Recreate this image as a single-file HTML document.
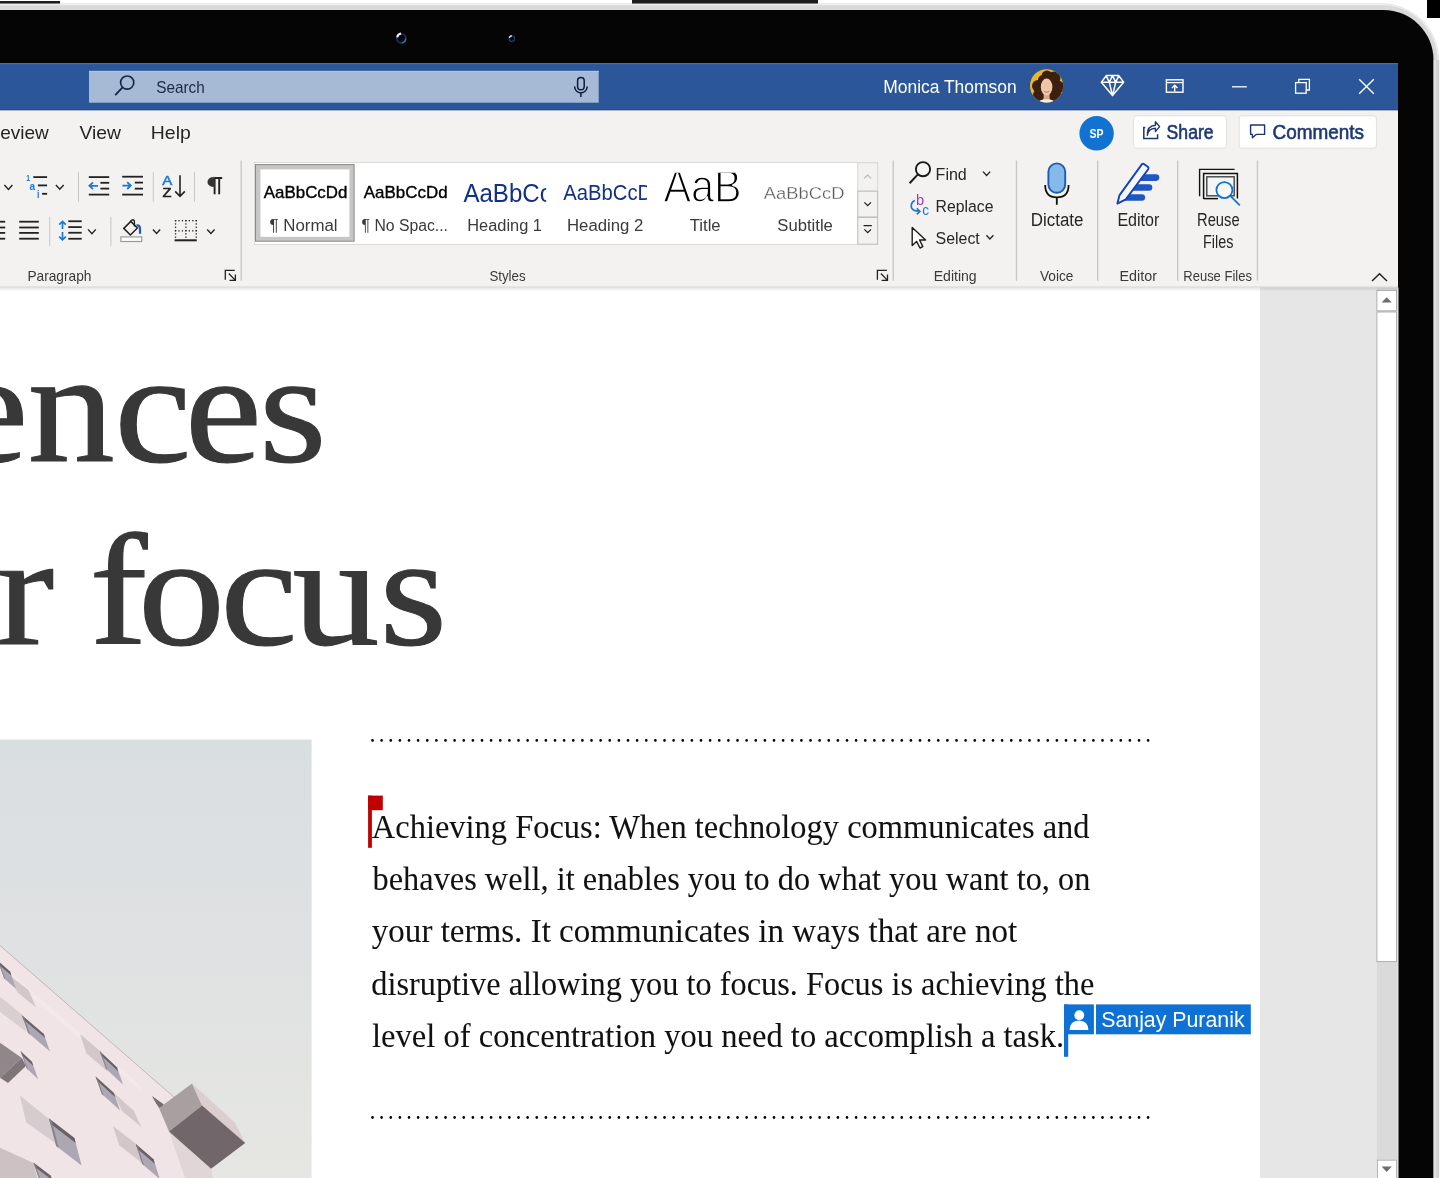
<!DOCTYPE html>
<html><head><meta charset="utf-8"><title>Word</title>
<style>
html,body{margin:0;padding:0;background:#fff;width:1440px;height:1178px;overflow:hidden;font-family:"Liberation Sans",sans-serif;}
svg{display:block;will-change:transform;}
</style></head><body>
<svg width="1440" height="1178" viewBox="0 0 1440 1178">
<rect x="0" y="0" width="1440" height="1178" fill="#ffffff" />
<rect x="-2" y="1" width="62" height="3.8" fill="#1c1c1c" />
<rect x="632" y="0" width="186" height="4.6" fill="#1c1c1c" />
<rect x="1427" y="0" width="13" height="18" fill="#000" />
<rect x="-120" y="3.6" width="1559" height="1400" rx="57" ry="57" fill="#d9d9da"/>
<rect x="-120" y="4.6" width="1558" height="1400" rx="56" ry="56" fill="none" stroke="#eeeeee" stroke-width="1.2"/>
<rect x="-120" y="10" width="1553.5" height="1400" rx="50" ry="50" fill="#050505"/>
<circle cx="401.3" cy="38.4" r="4.6" fill="#03060c" stroke="#1f3f7a" stroke-width="1.3"/>
<path d="M397.2 37.4 A4.6 4.6 0 0 1 401.0 33.6" fill="none" stroke="#f2f6ff" stroke-width="2.0" />
<path d="M405.6 38.6 A4.4 4.4 0 0 1 401.8 42.9" fill="none" stroke="#1f8a9a" stroke-width="1.3" />
<circle cx="511.8" cy="38.6" r="2.8" fill="#03060c" stroke="#23407a" stroke-width="1.1"/>
<path d="M509.4 37.8 A2.7 2.7 0 0 1 511.8 35.7" fill="none" stroke="#e8f0ff" stroke-width="1.4" />
<rect x="0" y="63" width="1398" height="1115" fill="#ffffff" />
<rect x="0" y="63" width="1398" height="47.5" fill="#2b579a" />
<rect x="0" y="63" width="1398" height="1.2" fill="#3a6cc0" />
<rect x="0" y="109.3" width="1398" height="1.2" fill="#234a88" />
<rect x="89" y="70.9" width="509.7" height="31.8" fill="#a6b9d5" />
<rect x="89" y="70.9" width="509.7" height="1" fill="#b3c6e0" />
<circle cx="127.2" cy="82.6" r="6.6" fill="none" stroke="#17264a" stroke-width="1.7"/>
<line x1="122.6" y1="87.4" x2="115.2" y2="95.2" stroke="#17264a" stroke-width="1.8" />
<text x="156.2" y="92.9" font-family="Liberation Sans" font-size="17" font-weight="400" fill="#1a2747" text-anchor="start" textLength="48.5" lengthAdjust="spacingAndGlyphs" >Search</text>
<rect x="577.6" y="77.6" width="6.6" height="12.2" rx="3.3" fill="none" stroke="#0e1a40" stroke-width="1.5"/>
<path d="M574.6 86.6 A6.3 6.3 0 0 0 587.2 86.6" fill="none" stroke="#0e1a40" stroke-width="1.5" />
<line x1="580.9" y1="92.9" x2="580.9" y2="97" stroke="#0e1a40" stroke-width="1.5" />
<text x="883.2" y="92.6" font-family="Liberation Sans" font-size="18" font-weight="400" fill="#ffffff" text-anchor="start" textLength="133.5" lengthAdjust="spacingAndGlyphs" >Monica Thomson</text>
<defs><clipPath id="avc"><circle cx="1046.6" cy="85.8" r="16.6"/></clipPath><radialGradient id="avbg" cx="0.5" cy="0.35" r="0.7"><stop offset="0" stop-color="#e8c24a"/><stop offset="1" stop-color="#b98a1c"/></radialGradient></defs>
<g clip-path="url(#avc)"><rect x="1029" y="68" width="36" height="36" fill="#e7b92a"/><circle cx="1047" cy="76" r="5.5" fill="#3d1f10"/><circle cx="1054" cy="78" r="6.5" fill="#3d1f10"/><circle cx="1038" cy="86" r="6" fill="#3d1f10"/><circle cx="1058" cy="87" r="6.5" fill="#3d1f10"/><circle cx="1039" cy="95" r="6" fill="#3d1f10"/><circle cx="1055" cy="96" r="6.5" fill="#3d1f10"/><circle cx="1047" cy="84" r="8.5" fill="#3d1f10"/><circle cx="1043" cy="80" r="5" fill="#3d1f10"/><rect x="1043.6" y="92" width="6" height="8" fill="#d9a584"/><ellipse cx="1046.6" cy="87" rx="5.8" ry="8.4" fill="#efc7a8"/><path d="M1044 91.4 Q1046.6 93.2 1049.2 91.4" fill="none" stroke="#c9677a" stroke-width="1"/><ellipse cx="1046.6" cy="103.2" rx="8.5" ry="4" fill="#f2efea"/></g>
<path d="M1106.2 75.6 L1118.8 75.6 L1123.6 82.2 L1112.5 95.6 L1101.4 82.2 Z M1101.4 82.2 L1123.6 82.2 M1106.2 75.6 L1109.3 82.2 L1112.5 95.6 L1115.7 82.2 L1118.8 75.6 M1109.3 82.2 L1112.5 75.6 L1115.7 82.2" fill="none" stroke="#ffffff" stroke-width="1.5" stroke-linejoin="round"/>
<rect x="1166.4" y="79.8" width="16.6" height="12.4" fill="none" stroke="#ffffff" stroke-width="1.4"/>
<line x1="1166.4" y1="82.6" x2="1183" y2="82.6" stroke="#ffffff" stroke-width="1.3" />
<path d="M1174.7 91.6 L1174.7 85.3 M1171.9 88 L1174.7 85.2 L1177.5 88" fill="none" stroke="#ffffff" stroke-width="1.4" />
<line x1="1232" y1="86.8" x2="1246.8" y2="86.8" stroke="#ffffff" stroke-width="1.3" />
<rect x="1295.6" y="82.6" width="10.6" height="10.6" fill="none" stroke="#ffffff" stroke-width="1.3"/>
<path d="M1298.8 82.6 L1298.8 79.4 L1309.4 79.4 L1309.4 90 L1306.2 90" fill="none" stroke="#ffffff" stroke-width="1.3" />
<path d="M1359.2 79.2 L1373.8 93.8 M1373.8 79.2 L1359.2 93.8" fill="none" stroke="#ffffff" stroke-width="1.4" />
<rect x="0" y="110.5" width="1398" height="177" fill="#f3f2f1" />
<rect x="0" y="286.5" width="1398" height="1.2" fill="#d8d6d4" />
<defs><linearGradient id="rsh" x1="0" y1="0" x2="0" y2="1"><stop offset="0" stop-color="#000" stop-opacity="0.10"/><stop offset="1" stop-color="#000" stop-opacity="0"/></linearGradient></defs>
<rect x="0" y="287.7" width="1376" height="5" fill="url(#rsh)" />
<text x="48.8" y="139" font-family="Liberation Sans" font-size="19" font-weight="400" fill="#262626" text-anchor="end" >Review</text>
<text x="79.5" y="139" font-family="Liberation Sans" font-size="19" font-weight="400" fill="#262626" text-anchor="start" textLength="41.5" lengthAdjust="spacingAndGlyphs" >View</text>
<text x="150.8" y="139" font-family="Liberation Sans" font-size="19" font-weight="400" fill="#262626" text-anchor="start" textLength="40" lengthAdjust="spacingAndGlyphs" >Help</text>
<circle cx="1096.6" cy="133.3" r="17.2" fill="#1172d1"/>
<text x="1096.6" y="138.2" font-family="Liberation Sans" font-size="12" font-weight="700" fill="#ffffff" text-anchor="middle" textLength="14" lengthAdjust="spacingAndGlyphs" >SP</text>
<rect x="1133.6" y="115.8" width="93" height="32.4" rx="2.5" fill="#ffffff" stroke="#e1dfdd" stroke-width="1"/>
<path d="M1145.2 127.6 L1143.8 127.6 L1143.8 138.6 L1157.6 138.6 L1157.6 134.2" fill="none" stroke="#1e3670" stroke-width="1.5" />
<path d="M1147.4 135.2 Q1148 128.6 1155.4 128.2 L1155.4 131.6 L1159.6 126.6 L1155.4 121.8 L1155.4 125.2 Q1147 125.8 1147.4 135.2Z" fill="none" stroke="#1e3670" stroke-width="1.4" stroke-linejoin="round"/>
<text x="1166.6" y="138.9" font-family="Liberation Sans" font-size="20" font-weight="400" fill="#1d3876" text-anchor="start" textLength="47" lengthAdjust="spacingAndGlyphs" stroke="#1d3876" stroke-width="0.6">Share</text>
<rect x="1239.2" y="115.8" width="137.2" height="32.4" rx="2.5" fill="#ffffff" stroke="#e1dfdd" stroke-width="1"/>
<path d="M1250.6 125 L1264.6 125 L1264.6 134.4 L1256.2 134.4 L1252.4 137.8 L1252.4 134.4 L1250.6 134.4 Z" fill="none" stroke="#1e3670" stroke-width="1.4" stroke-linejoin="round"/>
<text x="1272.6" y="138.9" font-family="Liberation Sans" font-size="20" font-weight="400" fill="#1d3876" text-anchor="start" textLength="91.5" lengthAdjust="spacingAndGlyphs" stroke="#1d3876" stroke-width="0.6">Comments</text>
<text x="27.4" y="280.8" font-family="Liberation Sans" font-size="14.2" font-weight="400" fill="#3b3a39" text-anchor="start" textLength="64" lengthAdjust="spacingAndGlyphs" >Paragraph</text>
<text x="489.4" y="280.8" font-family="Liberation Sans" font-size="14.2" font-weight="400" fill="#3b3a39" text-anchor="start" textLength="36.2" lengthAdjust="spacingAndGlyphs" >Styles</text>
<text x="933.7" y="280.8" font-family="Liberation Sans" font-size="14.2" font-weight="400" fill="#3b3a39" text-anchor="start" textLength="43" lengthAdjust="spacingAndGlyphs" >Editing</text>
<text x="1040" y="280.8" font-family="Liberation Sans" font-size="14.2" font-weight="400" fill="#3b3a39" text-anchor="start" textLength="33.5" lengthAdjust="spacingAndGlyphs" >Voice</text>
<text x="1119.5" y="280.8" font-family="Liberation Sans" font-size="14.2" font-weight="400" fill="#3b3a39" text-anchor="start" textLength="37.4" lengthAdjust="spacingAndGlyphs" >Editor</text>
<text x="1183.3" y="280.8" font-family="Liberation Sans" font-size="14.2" font-weight="400" fill="#3b3a39" text-anchor="start" textLength="68.6" lengthAdjust="spacingAndGlyphs" >Reuse Files</text>
<rect x="240.6" y="160.5" width="1.3" height="120.3" fill="#c8c6c4" />
<rect x="892.6" y="160.5" width="1.3" height="120.3" fill="#c8c6c4" />
<rect x="1015.8" y="160.5" width="1.3" height="120.3" fill="#c8c6c4" />
<rect x="1097.0" y="160.5" width="1.3" height="120.3" fill="#c8c6c4" />
<rect x="1177.0" y="160.5" width="1.3" height="120.3" fill="#c8c6c4" />
<rect x="1256.8000000000002" y="160.5" width="1.3" height="120.3" fill="#c8c6c4" />
<path d="M234.8 270.3 L225.3 270.3 L225.3 279.7" fill="none" stroke="#222" stroke-width="1.3" />
<path d="M228.8 273.5 L234.9 279.90000000000003 M235.4 274.40000000000003 L235.4 280.40000000000003 L229.5 280.40000000000003" fill="none" stroke="#222" stroke-width="1.3" />
<path d="M886.9 270.3 L877.4 270.3 L877.4 279.7" fill="none" stroke="#222" stroke-width="1.3" />
<path d="M880.9 273.5 L887.0 279.90000000000003 M887.5 274.40000000000003 L887.5 280.40000000000003 L881.6 280.40000000000003" fill="none" stroke="#222" stroke-width="1.3" />
<path d="M1372 281 L1379.5 273.8 L1387 281" fill="none" stroke="#222" stroke-width="1.5" />
<path d="M4.4 185.04 L8.4 189.35999999999999 L12.4 185.04" fill="none" stroke="#222" stroke-width="1.4" />
<text x="26.2" y="180.8" font-family="Liberation Sans" font-size="9.5" font-weight="700" fill="#1b79d3" text-anchor="start" textLength="3.8" lengthAdjust="spacingAndGlyphs" >1</text>
<text x="29.6" y="189.5" font-family="Liberation Sans" font-size="10.5" font-weight="700" fill="#1b79d3" text-anchor="start" textLength="5.6" lengthAdjust="spacingAndGlyphs" >a</text>
<text x="37.1" y="197.6" font-family="Liberation Sans" font-size="10.5" font-weight="700" fill="#1b79d3" text-anchor="start" textLength="2.4" lengthAdjust="spacingAndGlyphs" >i</text>
<rect x="33.3" y="176.2" width="13.8" height="1.8" fill="#222222" />
<rect x="37.9" y="184.5" width="9.2" height="1.8" fill="#222222" />
<rect x="42.1" y="192.9" width="5" height="1.8" fill="#222222" />
<path d="M55.9 185.094 L59.8 189.30599999999998 L63.7 185.094" fill="none" stroke="#222" stroke-width="1.4" />
<rect x="78" y="172.2" width="1" height="29.5" fill="#c8c6c4" />
<rect x="88.8" y="176.2" width="20.4" height="1.8" fill="#222222" />
<rect x="100.4" y="181.9" width="8.8" height="1.8" fill="#222222" />
<rect x="100.4" y="187.7" width="8.8" height="1.8" fill="#222222" />
<rect x="88.8" y="193.7" width="20.4" height="1.8" fill="#222222" />
<path d="M98 185.8 L89.6 185.8 M93 182.4 L89.4 185.8 L93 189.2" fill="none" stroke="#1b79d3" stroke-width="1.8" />
<rect x="122.2" y="175.8" width="20.8" height="1.8" fill="#222222" />
<rect x="134.8" y="181.7" width="8.2" height="1.8" fill="#222222" />
<rect x="134.8" y="187.75" width="8.2" height="1.8" fill="#222222" />
<rect x="122.2" y="193.7" width="20.8" height="1.8" fill="#222222" />
<path d="M122.4 185.6 L130.6 185.6 M127.2 182.2 L130.8 185.6 L127.2 189" fill="none" stroke="#1b79d3" stroke-width="1.8" />
<rect x="152.8" y="172.2" width="1" height="29.5" fill="#c8c6c4" />
<text x="162.2" y="184.5" font-family="Liberation Sans" font-size="12.6" font-weight="400" fill="#1b79d3" text-anchor="start" textLength="10" lengthAdjust="spacingAndGlyphs" stroke="#1b79d3" stroke-width="0.5">A</text>
<text x="162.4" y="197.1" font-family="Liberation Sans" font-size="12.6" font-weight="400" fill="#222222" text-anchor="start" textLength="9" lengthAdjust="spacingAndGlyphs" stroke="#222" stroke-width="0.5">Z</text>
<path d="M180 175.2 L180 196.2 M175.2 191.4 L180 196.4 L184.8 191.4" fill="none" stroke="#222222" stroke-width="1.6" />
<rect x="194" y="172.2" width="1" height="29.5" fill="#c8c6c4" />
<path d="M214.6 178 L222.2 178 M214.6 178 L214.6 194.3 M219.2 178 L219.2 194.3" fill="none" stroke="#222222" stroke-width="1.9" />
<path d="M214.6 177.2 Q207.8 177.2 207.8 181.9 Q207.8 186.6 214.6 186.6 Z" fill="#333" stroke="#333" stroke-width="0.6" />
<rect x="-1" y="220.79999999999998" width="6.2" height="1.8" fill="#222222" />
<rect x="19.2" y="220.79999999999998" width="19.6" height="1.8" fill="#222222" />
<rect x="-1" y="226.6" width="6.2" height="1.8" fill="#222222" />
<rect x="19.2" y="226.6" width="19.6" height="1.8" fill="#222222" />
<rect x="-1" y="232.0" width="6.2" height="1.8" fill="#222222" />
<rect x="19.2" y="232.0" width="19.6" height="1.8" fill="#222222" />
<rect x="-1" y="237.79999999999998" width="6.2" height="1.8" fill="#222222" />
<rect x="19.2" y="237.79999999999998" width="19.6" height="1.8" fill="#222222" />
<rect x="49.2" y="216.8" width="1" height="29" fill="#c8c6c4" />
<rect x="68.3" y="220.35" width="13.4" height="1.8" fill="#222222" />
<rect x="68.3" y="226.2" width="13.4" height="1.8" fill="#222222" />
<rect x="68.3" y="231.85" width="13.4" height="1.8" fill="#222222" />
<rect x="68.3" y="237.85" width="13.4" height="1.8" fill="#222222" />
<path d="M62.5 221.6 L62.5 229 M59.2 224.6 L62.5 221.4 L65.8 224.6 M62.5 232 L62.5 239.6 M59.2 236.6 L62.5 239.8 L65.8 236.6" fill="none" stroke="#1b79d3" stroke-width="1.7" />
<path d="M88 229.394 L91.9 233.606 L95.8 229.394" fill="none" stroke="#222" stroke-width="1.4" />
<rect x="110.4" y="216.8" width="1" height="29" fill="#c8c6c4" />
<path d="M123.8 228.4 L130.8 221.4 L137.4 228 L130.4 235 Z" fill="none" stroke="#222222" stroke-width="1.5" stroke-linejoin="miter"/>
<path d="M130.2 222 L131.4 220.6 Q133.4 218.8 134.4 221 L134.4 226.6" fill="none" stroke="#222222" stroke-width="1.4" />
<path d="M136.6 225.4 Q139.8 224.8 140 228.6 L140 233.8" fill="none" stroke="#1f56b5" stroke-width="2.2" />
<rect x="120.9" y="236.9" width="20.8" height="4.6" fill="#ffffff" stroke="#9a9a9a" stroke-width="1.2"/>
<path d="M153 229.556 L156.6 233.444 L160.2 229.556" fill="none" stroke="#222" stroke-width="1.4" />
<g fill="#222">
<rect x="174.90" y="220" width="1.3" height="1.3"/>
<rect x="174.90" y="230.2" width="1.3" height="1.3"/>
<rect x="178.35" y="220" width="1.3" height="1.3"/>
<rect x="178.35" y="230.2" width="1.3" height="1.3"/>
<rect x="181.80" y="220" width="1.3" height="1.3"/>
<rect x="181.80" y="230.2" width="1.3" height="1.3"/>
<rect x="185.25" y="220" width="1.3" height="1.3"/>
<rect x="185.25" y="230.2" width="1.3" height="1.3"/>
<rect x="188.70" y="220" width="1.3" height="1.3"/>
<rect x="188.70" y="230.2" width="1.3" height="1.3"/>
<rect x="192.15" y="220" width="1.3" height="1.3"/>
<rect x="192.15" y="230.2" width="1.3" height="1.3"/>
<rect x="195.60" y="220" width="1.3" height="1.3"/>
<rect x="195.60" y="230.2" width="1.3" height="1.3"/>
<rect x="174.9" y="220.00" width="1.3" height="1.3"/>
<rect x="185.25" y="220.00" width="1.3" height="1.3"/>
<rect x="195.6" y="220.00" width="1.3" height="1.3"/>
<rect x="174.9" y="223.30" width="1.3" height="1.3"/>
<rect x="185.25" y="223.30" width="1.3" height="1.3"/>
<rect x="195.6" y="223.30" width="1.3" height="1.3"/>
<rect x="174.9" y="226.60" width="1.3" height="1.3"/>
<rect x="185.25" y="226.60" width="1.3" height="1.3"/>
<rect x="195.6" y="226.60" width="1.3" height="1.3"/>
<rect x="174.9" y="229.90" width="1.3" height="1.3"/>
<rect x="185.25" y="229.90" width="1.3" height="1.3"/>
<rect x="195.6" y="229.90" width="1.3" height="1.3"/>
<rect x="174.9" y="233.20" width="1.3" height="1.3"/>
<rect x="185.25" y="233.20" width="1.3" height="1.3"/>
<rect x="195.6" y="233.20" width="1.3" height="1.3"/>
<rect x="174.9" y="236.50" width="1.3" height="1.3"/>
<rect x="185.25" y="236.50" width="1.3" height="1.3"/>
<rect x="195.6" y="236.50" width="1.3" height="1.3"/>
</g>
<rect x="174.6" y="239.3" width="22.2" height="2" fill="#222222" />
<path d="M207.2 229.502 L210.89999999999998 233.498 L214.6 229.502" fill="none" stroke="#222" stroke-width="1.4" />
<rect x="254.5" y="162.5" width="623" height="82" fill="#ffffff" stroke="#dcdad8" stroke-width="1"/>
<rect x="255.5" y="164.6" width="98.6" height="76.6" fill="#c8c6c4" stroke="#8a8886" stroke-width="1"/>
<rect x="260.4" y="169.4" width="89" height="67.4" fill="#ffffff" />
<text x="263.8" y="198.3" font-family="Liberation Sans" font-size="16.4" font-weight="400" fill="#000000" text-anchor="start" textLength="83.6" lengthAdjust="spacingAndGlyphs" stroke="#000" stroke-width="0.35">AaBbCcDd</text>
<text x="269.6" y="231.2" font-family="Liberation Sans" font-size="16" font-weight="400" fill="#3b3a39" text-anchor="start" textLength="68" lengthAdjust="spacingAndGlyphs" >¶ Normal</text>
<text x="363.8" y="198.3" font-family="Liberation Sans" font-size="16.4" font-weight="400" fill="#000000" text-anchor="start" textLength="83.8" lengthAdjust="spacingAndGlyphs" stroke="#000" stroke-width="0.35">AaBbCcDd</text>
<text x="361.6" y="231.2" font-family="Liberation Sans" font-size="16" font-weight="400" fill="#3b3a39" text-anchor="start" textLength="86.4" lengthAdjust="spacingAndGlyphs" >¶ No Spac...</text>
<defs><clipPath id="h1c"><rect x="455" y="163" width="91.2" height="60"/></clipPath><clipPath id="h2c"><rect x="555" y="163" width="92" height="60"/></clipPath><clipPath id="tc"><rect x="655" y="172.85" width="90" height="50"/></clipPath></defs>
<text x="463.4" y="201.6" font-family="Liberation Sans" font-size="25.6" font-weight="400" fill="#10308a" text-anchor="start" textLength="88.3" lengthAdjust="spacingAndGlyphs" clip-path="url(#h1c)">AaBbCc</text>
<text x="467.2" y="231.4" font-family="Liberation Sans" font-size="16" font-weight="400" fill="#3b3a39" text-anchor="start" textLength="74.8" lengthAdjust="spacingAndGlyphs" >Heading 1</text>
<text x="563.2" y="200" font-family="Liberation Sans" font-size="22.4" font-weight="400" fill="#10308a" text-anchor="start" textLength="89" lengthAdjust="spacingAndGlyphs" clip-path="url(#h2c)">AaBbCcD</text>
<text x="567" y="231.4" font-family="Liberation Sans" font-size="16" font-weight="400" fill="#3b3a39" text-anchor="start" textLength="76.4" lengthAdjust="spacingAndGlyphs" >Heading 2</text>
<text x="663.4" y="201.7" font-family="Liberation Sans" font-size="46" font-weight="400" fill="#000000" text-anchor="start" textLength="78.4" lengthAdjust="spacingAndGlyphs" clip-path="url(#tc)" stroke="#fff" stroke-width="1.5">AaB</text>
<text x="689.8" y="231.4" font-family="Liberation Sans" font-size="16" font-weight="400" fill="#3b3a39" text-anchor="start" textLength="30.8" lengthAdjust="spacingAndGlyphs" >Title</text>
<text x="763.8" y="198.8" font-family="Liberation Sans" font-size="17.4" font-weight="400" fill="#595959" text-anchor="start" textLength="80.6" lengthAdjust="spacingAndGlyphs" stroke="#fff" stroke-width="0.3">AaBbCcD</text>
<text x="777.3" y="231.4" font-family="Liberation Sans" font-size="16" font-weight="400" fill="#3b3a39" text-anchor="start" textLength="55.6" lengthAdjust="spacingAndGlyphs" >Subtitle</text>
<rect x="857.5" y="162.5" width="20.3" height="82" fill="#f3f2f1" />
<rect x="857.8" y="162.8" width="19.8" height="28.2" fill="#f3f2f1" stroke="#d8d6d4" stroke-width="1"/>
<rect x="857.8" y="191.2" width="19.8" height="25.8" fill="#f3f2f1" stroke="#bebcba" stroke-width="1"/>
<rect x="857.8" y="217.4" width="19.8" height="26.8" fill="#f3f2f1" stroke="#bebcba" stroke-width="1"/>
<path d="M864.2 178.4 L867.7 175 L871.2 178.4" fill="none" stroke="#b8b6b4" stroke-width="1.2" />
<path d="M864.4 202.4 L867.7 205.6 L871 202.4" fill="none" stroke="#222" stroke-width="1.3" />
<path d="M863.6 225.6 L871.8 225.6 M864.4 229.4 L867.7 232.6 L871 229.4" fill="none" stroke="#222" stroke-width="1.3" />
<circle cx="923" cy="169.2" r="7.1" fill="#f6f6f6" stroke="#1a1a1a" stroke-width="1.9"/>
<line x1="917.9" y1="174.4" x2="909.6" y2="183.2" stroke="#1a1a1a" stroke-width="2" />
<text x="935.6" y="179.6" font-family="Liberation Sans" font-size="17.2" font-weight="400" fill="#262626" text-anchor="start" textLength="31.2" lengthAdjust="spacingAndGlyphs" >Find</text>
<path d="M983 171.65599999999998 L986.6 175.544 L990.2 171.65599999999998" fill="none" stroke="#222" stroke-width="1.3" />
<text x="916" y="204.7" font-family="Liberation Sans" font-size="14" font-weight="400" fill="#a23cb8" text-anchor="start" textLength="8.2" lengthAdjust="spacingAndGlyphs" >b</text>
<path d="M914.8 200.4 Q910.4 202.4 911.4 207.6 Q912.6 211.4 920 211.2" fill="none" stroke="#1e78cf" stroke-width="1.7" />
<path d="M916.8 208.4 L919.9 211.4 L916.8 214.4" fill="none" stroke="#1e78cf" stroke-width="1.6" />
<text x="922.2" y="215.4" font-family="Liberation Sans" font-size="14.5" font-weight="400" fill="#1e78cf" text-anchor="start" textLength="6.8" lengthAdjust="spacingAndGlyphs" >c</text>
<text x="935.6" y="211.5" font-family="Liberation Sans" font-size="17.2" font-weight="400" fill="#262626" text-anchor="start" textLength="57.8" lengthAdjust="spacingAndGlyphs" >Replace</text>
<path d="M912.2 227.4 L912.2 245.6 L916.6 241.4 L920 248 L922.8 246.6 L919.6 240 L925.6 240 Z" fill="#ffffff" stroke="#1a1a1a" stroke-width="1.4" stroke-linejoin="round"/>
<text x="935.6" y="244.1" font-family="Liberation Sans" font-size="17.2" font-weight="400" fill="#262626" text-anchor="start" textLength="44.2" lengthAdjust="spacingAndGlyphs" >Select</text>
<path d="M986.4 235.21 L989.9 238.98999999999998 L993.4 235.21" fill="none" stroke="#222" stroke-width="1.3" />
<rect x="1048.4" y="163.4" width="16.8" height="29.4" rx="8.4" fill="#84b9e9" stroke="#1b5cb6" stroke-width="1.9"/>
<path d="M1045.2 185 Q1045.2 197.4 1056.8 197.4 Q1068.6 197.4 1068.6 185" fill="none" stroke="#111" stroke-width="1.8" />
<line x1="1056.8" y1="197.4" x2="1056.8" y2="204.8" stroke="#111" stroke-width="1.8" />
<text x="1030.8" y="226.3" font-family="Liberation Sans" font-size="17.6" font-weight="400" fill="#262626" text-anchor="start" textLength="52.6" lengthAdjust="spacingAndGlyphs" >Dictate</text>
<line x1="1138" y1="177.6" x2="1156" y2="177.6" stroke="#1f56c0" stroke-width="6.6" stroke-linecap="round"/>
<line x1="1130" y1="187.5" x2="1149" y2="187.5" stroke="#1f56c0" stroke-width="6.6" stroke-linecap="round"/>
<line x1="1124" y1="197.5" x2="1141.8" y2="197.5" stroke="#1f56c0" stroke-width="6.6" stroke-linecap="round"/>
<path d="M1117.4 203.6 L1119.4 195.4 L1141.8 164.4 Q1142.8 163.2 1144 164 L1148 167 Q1149 168 1148.2 169.2 L1125.8 199.4 Z" fill="#f7f7f7" stroke="#0e45b8" stroke-width="1.9" stroke-linejoin="round"/>
<text x="1117.4" y="226.3" font-family="Liberation Sans" font-size="17.6" font-weight="400" fill="#262626" text-anchor="start" textLength="42" lengthAdjust="spacingAndGlyphs" >Editor</text>
<path d="M1199.6 196.2 L1199.6 169.4 L1234.6 169.4" fill="none" stroke="#111" stroke-width="1.4" />
<path d="M1203.6 199 L1203.6 173.6 L1237.4 173.6 L1237.4 198.6" fill="none" stroke="#111" stroke-width="1.5" />
<line x1="1203.6" y1="198.6" x2="1218" y2="198.6" stroke="#111" stroke-width="1.5" />
<rect x="1206.8" y="176.8" width="27.4" height="19" fill="#f4f5f7" stroke="#444" stroke-width="1.4"/>
<circle cx="1224.4" cy="190.1" r="8" fill="#f5f7f9" stroke="#1671c9" stroke-width="1.8"/>
<line x1="1230.2" y1="195.6" x2="1239.8" y2="205.4" stroke="#1671c9" stroke-width="1.8" />
<text x="1197" y="225.8" font-family="Liberation Sans" font-size="17.6" font-weight="400" fill="#262626" text-anchor="start" textLength="42.6" lengthAdjust="spacingAndGlyphs" >Reuse</text>
<text x="1203" y="248.3" font-family="Liberation Sans" font-size="17.6" font-weight="400" fill="#262626" text-anchor="start" textLength="30.4" lengthAdjust="spacingAndGlyphs" >Files</text>
<rect x="0" y="287.5" width="1260" height="890.5" fill="#ffffff" />
<rect x="1260" y="287.5" width="116.5" height="890.5" fill="#e6e6e6" />
<rect x="1376.5" y="287.5" width="21.5" height="890.5" fill="#dadada" />
<rect x="1376.9" y="290.4" width="19.6" height="20.4" fill="#ffffff" stroke="#a9a9a9" stroke-width="0.9"/>
<path d="M1381.6 302.6 L1386.7 297.2 L1391.8 302.6 Z" fill="#6e6e6e" />
<rect x="1376.9" y="312" width="19.6" height="649.6" fill="#ffffff" stroke="#a9a9a9" stroke-width="0.9"/>
<rect x="1377.4" y="1160.2" width="19" height="20" fill="#ffffff" stroke="#b0b0b0" stroke-width="0.9"/>
<path d="M1381.6 1166.6 L1391.8 1166.6 L1386.7 1172 Z" fill="#6e6e6e" />
<rect x="1397.6" y="287.5" width="0.9" height="890.5" fill="#e8ecf4" />
<rect x="0" y="287.5" width="1398" height="4" fill="url(#rsh)" />
<rect x="1433.6" y="60" width="5.6" height="1118" fill="#d4d4d6" />
<rect x="1434.4" y="60" width="1.2" height="1118" fill="#ececec" />
<text transform="scale(1.1 1)" x="-44.29 25.34 103.9 168.0 235.55" y="461.5" font-family="Liberation Serif" font-size="158" fill="#383838" stroke="#383838" stroke-width="1.1">ences</text>
<text transform="scale(1.1 1)" x="-3.32 81.35 125.36 200.22 265.81 345.01" y="644" font-family="Liberation Serif" font-size="158" fill="#383838" stroke="#383838" stroke-width="1.1">rfocus</text>
<defs><linearGradient id="sky" x1="0" y1="0" x2="0" y2="1"><stop offset="0" stop-color="#d9dee1"/><stop offset="0.45" stop-color="#dfe1e2"/><stop offset="1" stop-color="#e6e7e2"/></linearGradient><clipPath id="imgc"><rect x="0" y="739.5" width="311.6" height="440"/></clipPath></defs>
<rect x="0" y="739.5" width="311.6" height="440" fill="url(#sky)" />
<g fill="#000">
<ellipse cx="372.50" cy="740.4" rx="1.3" ry="1.45"/>
<ellipse cx="381.62" cy="740.4" rx="1.3" ry="1.45"/>
<ellipse cx="390.75" cy="740.4" rx="1.3" ry="1.45"/>
<ellipse cx="399.88" cy="740.4" rx="1.3" ry="1.45"/>
<ellipse cx="409.00" cy="740.4" rx="1.3" ry="1.45"/>
<ellipse cx="418.12" cy="740.4" rx="1.3" ry="1.45"/>
<ellipse cx="427.25" cy="740.4" rx="1.3" ry="1.45"/>
<ellipse cx="436.38" cy="740.4" rx="1.3" ry="1.45"/>
<ellipse cx="445.50" cy="740.4" rx="1.3" ry="1.45"/>
<ellipse cx="454.62" cy="740.4" rx="1.3" ry="1.45"/>
<ellipse cx="463.75" cy="740.4" rx="1.3" ry="1.45"/>
<ellipse cx="472.88" cy="740.4" rx="1.3" ry="1.45"/>
<ellipse cx="482.00" cy="740.4" rx="1.3" ry="1.45"/>
<ellipse cx="491.12" cy="740.4" rx="1.3" ry="1.45"/>
<ellipse cx="500.25" cy="740.4" rx="1.3" ry="1.45"/>
<ellipse cx="509.38" cy="740.4" rx="1.3" ry="1.45"/>
<ellipse cx="518.50" cy="740.4" rx="1.3" ry="1.45"/>
<ellipse cx="527.62" cy="740.4" rx="1.3" ry="1.45"/>
<ellipse cx="536.75" cy="740.4" rx="1.3" ry="1.45"/>
<ellipse cx="545.88" cy="740.4" rx="1.3" ry="1.45"/>
<ellipse cx="555.00" cy="740.4" rx="1.3" ry="1.45"/>
<ellipse cx="564.12" cy="740.4" rx="1.3" ry="1.45"/>
<ellipse cx="573.25" cy="740.4" rx="1.3" ry="1.45"/>
<ellipse cx="582.38" cy="740.4" rx="1.3" ry="1.45"/>
<ellipse cx="591.50" cy="740.4" rx="1.3" ry="1.45"/>
<ellipse cx="600.62" cy="740.4" rx="1.3" ry="1.45"/>
<ellipse cx="609.75" cy="740.4" rx="1.3" ry="1.45"/>
<ellipse cx="618.88" cy="740.4" rx="1.3" ry="1.45"/>
<ellipse cx="628.00" cy="740.4" rx="1.3" ry="1.45"/>
<ellipse cx="637.12" cy="740.4" rx="1.3" ry="1.45"/>
<ellipse cx="646.25" cy="740.4" rx="1.3" ry="1.45"/>
<ellipse cx="655.38" cy="740.4" rx="1.3" ry="1.45"/>
<ellipse cx="664.50" cy="740.4" rx="1.3" ry="1.45"/>
<ellipse cx="673.62" cy="740.4" rx="1.3" ry="1.45"/>
<ellipse cx="682.75" cy="740.4" rx="1.3" ry="1.45"/>
<ellipse cx="691.88" cy="740.4" rx="1.3" ry="1.45"/>
<ellipse cx="701.00" cy="740.4" rx="1.3" ry="1.45"/>
<ellipse cx="710.12" cy="740.4" rx="1.3" ry="1.45"/>
<ellipse cx="719.25" cy="740.4" rx="1.3" ry="1.45"/>
<ellipse cx="728.38" cy="740.4" rx="1.3" ry="1.45"/>
<ellipse cx="737.50" cy="740.4" rx="1.3" ry="1.45"/>
<ellipse cx="746.62" cy="740.4" rx="1.3" ry="1.45"/>
<ellipse cx="755.75" cy="740.4" rx="1.3" ry="1.45"/>
<ellipse cx="764.88" cy="740.4" rx="1.3" ry="1.45"/>
<ellipse cx="774.00" cy="740.4" rx="1.3" ry="1.45"/>
<ellipse cx="783.12" cy="740.4" rx="1.3" ry="1.45"/>
<ellipse cx="792.25" cy="740.4" rx="1.3" ry="1.45"/>
<ellipse cx="801.38" cy="740.4" rx="1.3" ry="1.45"/>
<ellipse cx="810.50" cy="740.4" rx="1.3" ry="1.45"/>
<ellipse cx="819.62" cy="740.4" rx="1.3" ry="1.45"/>
<ellipse cx="828.75" cy="740.4" rx="1.3" ry="1.45"/>
<ellipse cx="837.88" cy="740.4" rx="1.3" ry="1.45"/>
<ellipse cx="847.00" cy="740.4" rx="1.3" ry="1.45"/>
<ellipse cx="856.12" cy="740.4" rx="1.3" ry="1.45"/>
<ellipse cx="865.25" cy="740.4" rx="1.3" ry="1.45"/>
<ellipse cx="874.38" cy="740.4" rx="1.3" ry="1.45"/>
<ellipse cx="883.50" cy="740.4" rx="1.3" ry="1.45"/>
<ellipse cx="892.62" cy="740.4" rx="1.3" ry="1.45"/>
<ellipse cx="901.75" cy="740.4" rx="1.3" ry="1.45"/>
<ellipse cx="910.88" cy="740.4" rx="1.3" ry="1.45"/>
<ellipse cx="920.00" cy="740.4" rx="1.3" ry="1.45"/>
<ellipse cx="929.12" cy="740.4" rx="1.3" ry="1.45"/>
<ellipse cx="938.25" cy="740.4" rx="1.3" ry="1.45"/>
<ellipse cx="947.38" cy="740.4" rx="1.3" ry="1.45"/>
<ellipse cx="956.50" cy="740.4" rx="1.3" ry="1.45"/>
<ellipse cx="965.62" cy="740.4" rx="1.3" ry="1.45"/>
<ellipse cx="974.75" cy="740.4" rx="1.3" ry="1.45"/>
<ellipse cx="983.88" cy="740.4" rx="1.3" ry="1.45"/>
<ellipse cx="993.00" cy="740.4" rx="1.3" ry="1.45"/>
<ellipse cx="1002.12" cy="740.4" rx="1.3" ry="1.45"/>
<ellipse cx="1011.25" cy="740.4" rx="1.3" ry="1.45"/>
<ellipse cx="1020.38" cy="740.4" rx="1.3" ry="1.45"/>
<ellipse cx="1029.50" cy="740.4" rx="1.3" ry="1.45"/>
<ellipse cx="1038.62" cy="740.4" rx="1.3" ry="1.45"/>
<ellipse cx="1047.75" cy="740.4" rx="1.3" ry="1.45"/>
<ellipse cx="1056.88" cy="740.4" rx="1.3" ry="1.45"/>
<ellipse cx="1066.00" cy="740.4" rx="1.3" ry="1.45"/>
<ellipse cx="1075.12" cy="740.4" rx="1.3" ry="1.45"/>
<ellipse cx="1084.25" cy="740.4" rx="1.3" ry="1.45"/>
<ellipse cx="1093.38" cy="740.4" rx="1.3" ry="1.45"/>
<ellipse cx="1102.50" cy="740.4" rx="1.3" ry="1.45"/>
<ellipse cx="1111.62" cy="740.4" rx="1.3" ry="1.45"/>
<ellipse cx="1120.75" cy="740.4" rx="1.3" ry="1.45"/>
<ellipse cx="1129.88" cy="740.4" rx="1.3" ry="1.45"/>
<ellipse cx="1139.00" cy="740.4" rx="1.3" ry="1.45"/>
<ellipse cx="1148.12" cy="740.4" rx="1.3" ry="1.45"/>
<ellipse cx="372.50" cy="1117.5" rx="1.3" ry="1.45"/>
<ellipse cx="381.62" cy="1117.5" rx="1.3" ry="1.45"/>
<ellipse cx="390.75" cy="1117.5" rx="1.3" ry="1.45"/>
<ellipse cx="399.88" cy="1117.5" rx="1.3" ry="1.45"/>
<ellipse cx="409.00" cy="1117.5" rx="1.3" ry="1.45"/>
<ellipse cx="418.12" cy="1117.5" rx="1.3" ry="1.45"/>
<ellipse cx="427.25" cy="1117.5" rx="1.3" ry="1.45"/>
<ellipse cx="436.38" cy="1117.5" rx="1.3" ry="1.45"/>
<ellipse cx="445.50" cy="1117.5" rx="1.3" ry="1.45"/>
<ellipse cx="454.62" cy="1117.5" rx="1.3" ry="1.45"/>
<ellipse cx="463.75" cy="1117.5" rx="1.3" ry="1.45"/>
<ellipse cx="472.88" cy="1117.5" rx="1.3" ry="1.45"/>
<ellipse cx="482.00" cy="1117.5" rx="1.3" ry="1.45"/>
<ellipse cx="491.12" cy="1117.5" rx="1.3" ry="1.45"/>
<ellipse cx="500.25" cy="1117.5" rx="1.3" ry="1.45"/>
<ellipse cx="509.38" cy="1117.5" rx="1.3" ry="1.45"/>
<ellipse cx="518.50" cy="1117.5" rx="1.3" ry="1.45"/>
<ellipse cx="527.62" cy="1117.5" rx="1.3" ry="1.45"/>
<ellipse cx="536.75" cy="1117.5" rx="1.3" ry="1.45"/>
<ellipse cx="545.88" cy="1117.5" rx="1.3" ry="1.45"/>
<ellipse cx="555.00" cy="1117.5" rx="1.3" ry="1.45"/>
<ellipse cx="564.12" cy="1117.5" rx="1.3" ry="1.45"/>
<ellipse cx="573.25" cy="1117.5" rx="1.3" ry="1.45"/>
<ellipse cx="582.38" cy="1117.5" rx="1.3" ry="1.45"/>
<ellipse cx="591.50" cy="1117.5" rx="1.3" ry="1.45"/>
<ellipse cx="600.62" cy="1117.5" rx="1.3" ry="1.45"/>
<ellipse cx="609.75" cy="1117.5" rx="1.3" ry="1.45"/>
<ellipse cx="618.88" cy="1117.5" rx="1.3" ry="1.45"/>
<ellipse cx="628.00" cy="1117.5" rx="1.3" ry="1.45"/>
<ellipse cx="637.12" cy="1117.5" rx="1.3" ry="1.45"/>
<ellipse cx="646.25" cy="1117.5" rx="1.3" ry="1.45"/>
<ellipse cx="655.38" cy="1117.5" rx="1.3" ry="1.45"/>
<ellipse cx="664.50" cy="1117.5" rx="1.3" ry="1.45"/>
<ellipse cx="673.62" cy="1117.5" rx="1.3" ry="1.45"/>
<ellipse cx="682.75" cy="1117.5" rx="1.3" ry="1.45"/>
<ellipse cx="691.88" cy="1117.5" rx="1.3" ry="1.45"/>
<ellipse cx="701.00" cy="1117.5" rx="1.3" ry="1.45"/>
<ellipse cx="710.12" cy="1117.5" rx="1.3" ry="1.45"/>
<ellipse cx="719.25" cy="1117.5" rx="1.3" ry="1.45"/>
<ellipse cx="728.38" cy="1117.5" rx="1.3" ry="1.45"/>
<ellipse cx="737.50" cy="1117.5" rx="1.3" ry="1.45"/>
<ellipse cx="746.62" cy="1117.5" rx="1.3" ry="1.45"/>
<ellipse cx="755.75" cy="1117.5" rx="1.3" ry="1.45"/>
<ellipse cx="764.88" cy="1117.5" rx="1.3" ry="1.45"/>
<ellipse cx="774.00" cy="1117.5" rx="1.3" ry="1.45"/>
<ellipse cx="783.12" cy="1117.5" rx="1.3" ry="1.45"/>
<ellipse cx="792.25" cy="1117.5" rx="1.3" ry="1.45"/>
<ellipse cx="801.38" cy="1117.5" rx="1.3" ry="1.45"/>
<ellipse cx="810.50" cy="1117.5" rx="1.3" ry="1.45"/>
<ellipse cx="819.62" cy="1117.5" rx="1.3" ry="1.45"/>
<ellipse cx="828.75" cy="1117.5" rx="1.3" ry="1.45"/>
<ellipse cx="837.88" cy="1117.5" rx="1.3" ry="1.45"/>
<ellipse cx="847.00" cy="1117.5" rx="1.3" ry="1.45"/>
<ellipse cx="856.12" cy="1117.5" rx="1.3" ry="1.45"/>
<ellipse cx="865.25" cy="1117.5" rx="1.3" ry="1.45"/>
<ellipse cx="874.38" cy="1117.5" rx="1.3" ry="1.45"/>
<ellipse cx="883.50" cy="1117.5" rx="1.3" ry="1.45"/>
<ellipse cx="892.62" cy="1117.5" rx="1.3" ry="1.45"/>
<ellipse cx="901.75" cy="1117.5" rx="1.3" ry="1.45"/>
<ellipse cx="910.88" cy="1117.5" rx="1.3" ry="1.45"/>
<ellipse cx="920.00" cy="1117.5" rx="1.3" ry="1.45"/>
<ellipse cx="929.12" cy="1117.5" rx="1.3" ry="1.45"/>
<ellipse cx="938.25" cy="1117.5" rx="1.3" ry="1.45"/>
<ellipse cx="947.38" cy="1117.5" rx="1.3" ry="1.45"/>
<ellipse cx="956.50" cy="1117.5" rx="1.3" ry="1.45"/>
<ellipse cx="965.62" cy="1117.5" rx="1.3" ry="1.45"/>
<ellipse cx="974.75" cy="1117.5" rx="1.3" ry="1.45"/>
<ellipse cx="983.88" cy="1117.5" rx="1.3" ry="1.45"/>
<ellipse cx="993.00" cy="1117.5" rx="1.3" ry="1.45"/>
<ellipse cx="1002.12" cy="1117.5" rx="1.3" ry="1.45"/>
<ellipse cx="1011.25" cy="1117.5" rx="1.3" ry="1.45"/>
<ellipse cx="1020.38" cy="1117.5" rx="1.3" ry="1.45"/>
<ellipse cx="1029.50" cy="1117.5" rx="1.3" ry="1.45"/>
<ellipse cx="1038.62" cy="1117.5" rx="1.3" ry="1.45"/>
<ellipse cx="1047.75" cy="1117.5" rx="1.3" ry="1.45"/>
<ellipse cx="1056.88" cy="1117.5" rx="1.3" ry="1.45"/>
<ellipse cx="1066.00" cy="1117.5" rx="1.3" ry="1.45"/>
<ellipse cx="1075.12" cy="1117.5" rx="1.3" ry="1.45"/>
<ellipse cx="1084.25" cy="1117.5" rx="1.3" ry="1.45"/>
<ellipse cx="1093.38" cy="1117.5" rx="1.3" ry="1.45"/>
<ellipse cx="1102.50" cy="1117.5" rx="1.3" ry="1.45"/>
<ellipse cx="1111.62" cy="1117.5" rx="1.3" ry="1.45"/>
<ellipse cx="1120.75" cy="1117.5" rx="1.3" ry="1.45"/>
<ellipse cx="1129.88" cy="1117.5" rx="1.3" ry="1.45"/>
<ellipse cx="1139.00" cy="1117.5" rx="1.3" ry="1.45"/>
<ellipse cx="1148.12" cy="1117.5" rx="1.3" ry="1.45"/>
</g>
<g transform="translate(0 838.4) scale(1 1.03) translate(0 -838.4)">
<text x="371.88" y="838.4" font-family="Liberation Serif" font-size="33" font-weight="400" fill="#111111" text-anchor="start" textLength="717.71" lengthAdjust="spacingAndGlyphs" stroke="#111" stroke-width="0.05">Achieving Focus: When technology communicates and</text>
</g>
<g transform="translate(0 890.45) scale(1 1.03) translate(0 -890.45)">
<text x="372.6" y="890.45" font-family="Liberation Serif" font-size="33" font-weight="400" fill="#111111" text-anchor="start" textLength="717.79" lengthAdjust="spacingAndGlyphs" stroke="#111" stroke-width="0.05">behaves well, it enables you to do what you want to, on</text>
</g>
<g transform="translate(0 942.5) scale(1 1.03) translate(0 -942.5)">
<text x="371.8" y="942.5" font-family="Liberation Serif" font-size="33" font-weight="400" fill="#111111" text-anchor="start" textLength="645.4" lengthAdjust="spacingAndGlyphs" stroke="#111" stroke-width="0.05">your terms. It communicates in ways that are not</text>
</g>
<g transform="translate(0 994.55) scale(1 1.03) translate(0 -994.55)">
<text x="371.23" y="994.55" font-family="Liberation Serif" font-size="33" font-weight="400" fill="#111111" text-anchor="start" textLength="723.19" lengthAdjust="spacingAndGlyphs" stroke="#111" stroke-width="0.05">disruptive allowing you to focus. Focus is achieving the</text>
</g>
<g transform="translate(0 1046.6) scale(1 1.03) translate(0 -1046.6)">
<text x="371.95" y="1046.6" font-family="Liberation Serif" font-size="33" font-weight="400" fill="#111111" text-anchor="start" textLength="692.2" lengthAdjust="spacingAndGlyphs" stroke="#111" stroke-width="0.05">level of concentration you need to accomplish a task.</text>
</g>
<rect x="368.1" y="795.6" width="14.7" height="14.6" fill="#c00000" />
<rect x="368.1" y="795.6" width="3.8" height="52.2" fill="#c00000" />
<rect x="1064" y="1004.4" width="29.9" height="29.9" fill="#0e72d5" />
<rect x="1096" y="1004.4" width="154.8" height="29.9" fill="#0e72d5" />
<rect x="1064" y="1004.4" width="4.2" height="52.4" fill="#0e72d5" />
<circle cx="1079.3" cy="1015.2" r="4.9" fill="#fff"/>
<path d="M1069.6 1030 Q1069.8 1020.6 1079 1020.4 Q1088.2 1020.6 1088.4 1030 Z" fill="#fff" />
<text x="1101.23" y="1027.2" font-family="Liberation Sans" font-size="22.6" font-weight="400" fill="#ffffff" text-anchor="start" textLength="143.34" lengthAdjust="spacingAndGlyphs" >Sanjay Puranik</text>
<g clip-path="url(#imgc)">
<polygon points="0,945.5 175,1098 215,1178 0,1178" fill="#f1e4e6" />
<line x1="0" y1="945.5" x2="175" y2="1098" stroke="#b9a9ab" stroke-width="0.8" />
<polygon points="0,963 140,1085 143,1093 0,970" fill="#f3e8ea" />
<polygon points="8.8,974.8 28.5,990 36.1,1007.6 17.5,992.3" fill="#d3c7ca" />
<polygon points="0,996.7 21.9,1014.2 26.3,1031.7 0,1012" fill="#d9cfd2" />
<polygon points="80,1034 100.8,1051.4 107.3,1071.2 86.5,1053.6" fill="#d3c7ca" />
<polygon points="113.9,1093 133.6,1110.6 141.3,1127 121.6,1110.6" fill="#d3c7ca" />
<polygon points="19.7,1095.2 49.3,1119.3 55.9,1143.4 26.3,1122.6" fill="#d6cbce" />
<polygon points="112.8,1125.9 135.8,1143.4 142.4,1163.2 119.4,1145.6" fill="#d3c7ca" />
<polygon points="0,1147.8 34,1163.2 37.2,1178 0,1178" fill="#cdc1c4" />
<polygon points="-2,961 10,971.4 16.2,988.9 4.2,978.5" fill="#aca7b3" />
<polygon points="-2,961 10,971.4 11.488,975.6 -0.512,965.2" fill="#696264" />
<polygon points="-2,961 -0.7999999999999998,962.04 5.4,979.54 4.2,978.5" fill="#8a8387" />
<polygon points="21.9,1015.3 43.8,1033.8999999999999 50.0,1051.3999999999999 28.099999999999998,1032.8" fill="#aca7b3" />
<polygon points="21.9,1015.3 43.8,1033.8999999999999 45.288,1038.1 23.387999999999998,1019.5" fill="#696264" />
<polygon points="21.9,1015.3 24.09,1017.16 30.29,1034.6599999999999 28.099999999999998,1032.8" fill="#8a8387" />
<polygon points="20.7,1051.2 31.9,1061.8 38.1,1079.3 26.9,1068.7" fill="#aca7b3" />
<polygon points="20.7,1051.2 31.9,1061.8 33.388,1066.0 22.188,1055.4" fill="#696264" />
<polygon points="20.7,1051.2 21.82,1052.26 28.02,1069.76 26.9,1068.7" fill="#8a8387" />
<polygon points="99.8,1051.2 116.9,1067.2 123.10000000000001,1084.7 106.0,1068.7" fill="#aca7b3" />
<polygon points="99.8,1051.2 116.9,1067.2 118.388,1071.4 101.288,1055.4" fill="#696264" />
<polygon points="99.8,1051.2 101.50999999999999,1052.8 107.71,1070.3 106.0,1068.7" fill="#8a8387" />
<polygon points="95.6,1076.6 113.89999999999999,1093.1 120.1,1110.6 101.8,1094.1" fill="#aca7b3" />
<polygon points="95.6,1076.6 113.89999999999999,1093.1 115.38799999999999,1097.3 97.088,1080.8" fill="#696264" />
<polygon points="95.6,1076.6 97.42999999999999,1078.25 103.63,1095.75 101.8,1094.1" fill="#8a8387" />
<polygon points="49,1118.5 74.4,1138.0 81.60000000000001,1165.5 56.2,1146.0" fill="#aca7b3" />
<polygon points="49,1118.5 74.4,1138.0 75.69600000000001,1142.95 50.296,1123.45" fill="#696264" />
<polygon points="49,1118.5 51.54,1120.45 58.74,1147.95 56.2,1146.0" fill="#8a8387" />
<polygon points="135.8,1143.9 153.5,1159.2 159.9,1179.2 142.20000000000002,1163.9" fill="#aca7b3" />
<polygon points="135.8,1143.9 153.5,1159.2 155.036,1164.0 137.336,1148.7" fill="#696264" />
<polygon points="135.8,1143.9 137.57000000000002,1145.43 143.97000000000003,1165.43 142.20000000000002,1163.9" fill="#8a8387" />
<polygon points="33.6,1162.8 50.8,1175.8 56.8,1193.8 39.6,1180.8" fill="#aca7b3" />
<polygon points="33.6,1162.8 50.8,1175.8 52.239999999999995,1180.12 35.04,1167.12" fill="#696264" />
<polygon points="33.6,1162.8 35.32,1164.1 41.32,1182.1 39.6,1180.8" fill="#8a8387" />
<polygon points="152.2,1096.3 163.2,1104 166.5,1110.6 156.6,1104" fill="#6e6769" />
<polygon points="0,1042.7 21.9,1058 0,1077.7" fill="#8f8789" />
<polygon points="0,1077.7 21.9,1058 26,1066 8,1083" fill="#7d7577" />
<polygon points="169,1131.6 211.1,1168.7 213,1178 185,1178" fill="#e2d5d8" />
<polygon points="159,1108.1 192.1,1083.5 202.1,1105.6 169,1131.6" fill="#a89fa0" />
<polygon points="192.1,1083.5 235.2,1123.1 245.2,1143.1 202.1,1105.6" fill="#dccdcf" />
<polygon points="169,1131.6 202.1,1105.6 245.2,1143.1 211.1,1168.7" fill="#71676a" />
<polygon points="152,1096 163,1105.6 159,1108.1" fill="#776f71" />
</g>
</svg>
</body></html>
